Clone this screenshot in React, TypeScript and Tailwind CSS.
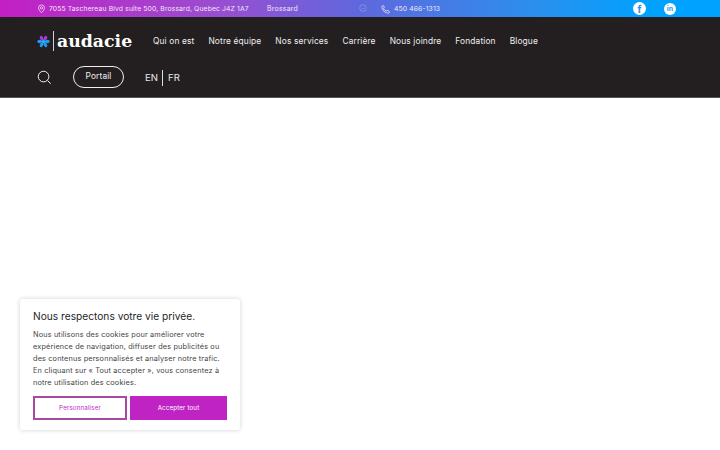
import React from "react";

const nav = ["Qui on est", "Notre équipe", "Nos services", "Carrière", "Nous joindre", "Fondation", "Blogue"];

function Star() {
  const colors = ["#a53be0", "#1f9bf0", "#1f9bf0", "#1f9bf0", "#1f9bf0", "#a53be0"];
  return (
    <svg width="13" height="13" viewBox="0 0 26 26">
      {colors.map((c, i) => (
        <g key={i} transform={`rotate(${i * 60 + 30} 13 13)`}>
          <ellipse cx="13" cy="5.500" rx="3.300" ry="5" fill={c} />
        </g>
      ))}
      <circle cx="13" cy="13" r="3" fill="#27c4e8" />
    </svg>
  );
}

export default function App() {
  return (
    <div className="relative h-[450px] w-[720px] overflow-hidden bg-white font-['Inter',sans-serif]">
      <div className="flex h-[17px] items-center bg-[linear-gradient(90deg,#c31fc4_0%,#9a4dd0_30%,#5f68dd_50%,#2a90ee_75%,#00a2ff_90%)] pl-[37px] text-[#f3e6f7]">
        <svg width="9" height="10" viewBox="0 0 24 24" fill="none" stroke="currentColor" strokeWidth="2" className="mt-[1px]">
          <path d="M12 22s8-7.400 8-13A8 8 0 0 0 4 9c0 5.600 8 13 8 13z" />
          <circle cx="12" cy="9" r="3" />
        </svg>
        <span className="ml-[3px] mt-[2px] w-[218px] text-[6.800px] leading-none tracking-[0.13px]">7055 Taschereau Blvd suite 500, Brossard, Quebec J4Z 1A7</span>
        <span className="mb-[1px] w-[92px] text-[7px] leading-none tracking-[0.2px]">Brossard</span>
        <svg width="8" height="8" viewBox="0 0 24 24" fill="none" stroke="currentColor" strokeWidth="1" className="mb-[1px] opacity-80">
          <circle cx="12" cy="12" r="10" />
          <path d="M8 12l4 3 4-3" />
        </svg>
        <svg width="9" height="9" viewBox="0 0 24 24" fill="none" stroke="currentColor" strokeWidth="2" className="ml-[14px] mt-[2px]">
          <path d="M22 17v3a2 2 0 0 1-2 2A19 19 0 0 1 2 4a2 2 0 0 1 2-2h3l2 5-2.500 1.500a12 12 0 0 0 8 8L16 14l6 3z" />
        </svg>
        <span className="ml-[4px] mt-[2px] w-[239px] text-[6.800px] leading-none tracking-[0.13px]">450 466-1313</span>
        <span className="flex h-[13px] w-[13px] items-center justify-center rounded-full bg-white text-[10px] font-bold leading-none text-[#2b8fe8]">f</span>
        <span className="ml-[18px] flex h-[12px] w-[12px] items-center justify-center rounded-full bg-white text-[7px] font-bold leading-none text-[#1b9bf5]">in</span>
      </div>

      <div className="h-[81px] border-b border-[#555] bg-[#231f20] pl-[37px]">
        <div className="flex h-[48.500px] items-center">
          <Star />
          <span className="ml-[3px] h-[20px] w-px bg-white/80" />
          <span className="ml-[3px] w-[96px] font-['DejaVu_Serif',serif] text-[17.300px] font-bold leading-none text-white">audacie</span>
          <nav className="flex gap-[14px] text-[8.400px] leading-none tracking-[0.13px] text-[#eeeeee]">
            {nav.map((n) => (
              <span key={n}>{n}</span>
            ))}
          </nav>
        </div>
        <div className="flex items-center">
          <svg width="15" height="15" viewBox="0 0 24 24" fill="none" stroke="#f2f2f2" strokeWidth="1.600" className="mt-[2px]">
            <circle cx="10.500" cy="10.500" r="8.500" />
            <path d="M17 17l5 5" />
          </svg>
          <span className="ml-[21px] flex h-[22px] w-[51px] items-center justify-center rounded-full border-[1.500px] border-[#f0f0f0] pb-[0.500px] text-[8.400px] leading-none tracking-[0.13px] text-[#eeeeee]">Portail</span>
          <span className="ml-[21px] mt-[3px] text-[9.600px] leading-none text-[#e8e8e8]">EN</span>
          <span className="ml-[4px] mt-[2px] h-[16px] w-px bg-[#dddddd]" />
          <span className="ml-[5px] mt-[3px] text-[9.600px] leading-none text-[#e8e8e8]">FR</span>
        </div>
      </div>

      <div className="absolute left-[20px] top-[299px] h-[131px] w-[220px] rounded-[3px] bg-white px-[13px] pt-[11px] shadow-[0_0_5px_rgba(0,0,0,0.18)]">
        <h2 className="text-[10.200px] font-normal leading-[13px] text-[#1f1f1f]">Nous respectons votre vie privée.</h2>
        <p className="mt-[6px] text-[7.300px] leading-[12px] tracking-[0.16px] text-[#444444]">
          Nous utilisons des cookies pour améliorer votre<br />
          expérience de navigation, diffuser des publicités ou<br />
          des contenus personnalisés et analyser notre trafic.<br />
          En cliquant sur « Tout accepter », vous consentez à<br />
          notre utilisation des cookies.
        </p>
        <div className="mt-[6.500px] flex gap-[3px]">
          <button className="h-[24px] w-[94px] border-2 border-[#a9489f] bg-white text-[6.200px] tracking-[0.15px] text-[#c026c8]">Personnaliser</button>
          <button className="h-[24px] w-[97px] border-2 border-[#c023c4] bg-[#c023c4] text-[6.200px] tracking-[0.15px] text-white">Accepter tout</button>
        </div>
      </div>
    </div>
  );
}
